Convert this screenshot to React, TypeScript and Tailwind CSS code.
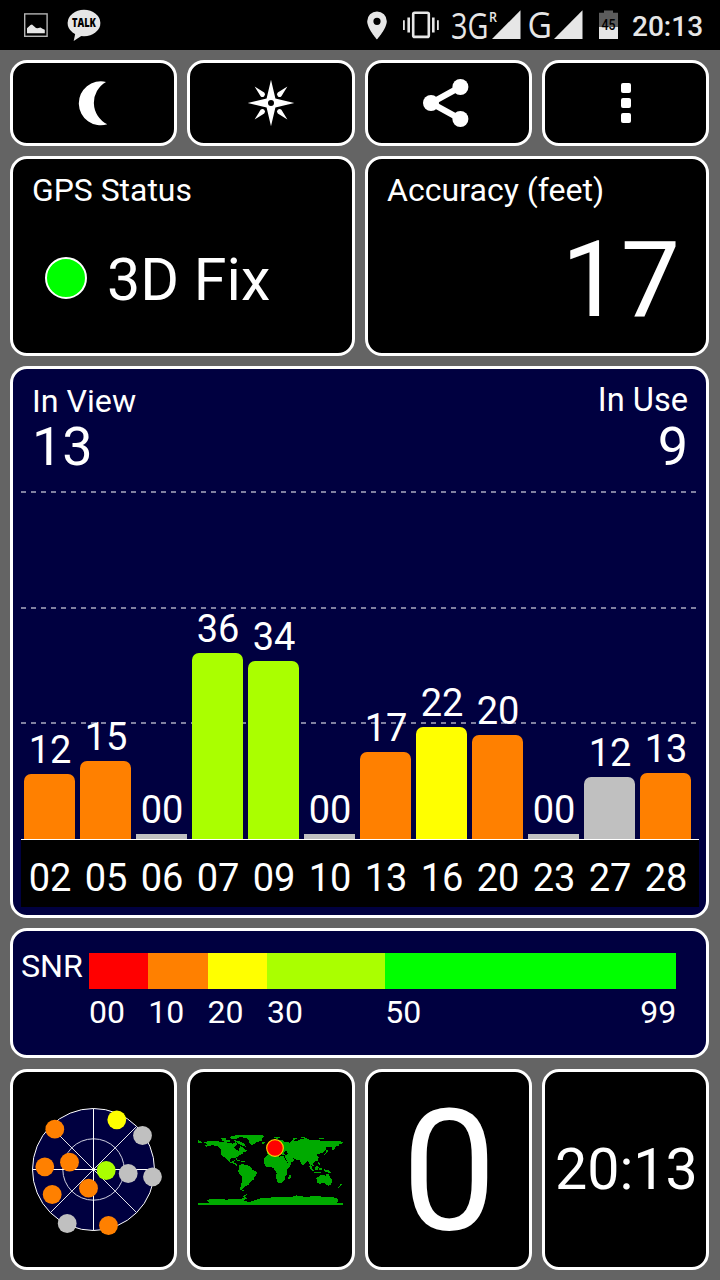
import React from 'react';

type Satellite = { id: string; snr: string; height: number; color: string };

const ORANGE = '#ff8000';
const LIME = '#aaff00';
const YELLOW = '#ffff00';
const GRAY = '#c0c0c0';

const satellites: Satellite[] = [
  { id: '02', snr: '12', height: 65, color: ORANGE },
  { id: '05', snr: '15', height: 78, color: ORANGE },
  { id: '06', snr: '00', height: 5, color: GRAY },
  { id: '07', snr: '36', height: 186, color: LIME },
  { id: '09', snr: '34', height: 178, color: LIME },
  { id: '10', snr: '00', height: 5, color: GRAY },
  { id: '13', snr: '17', height: 87, color: ORANGE },
  { id: '16', snr: '22', height: 112, color: YELLOW },
  { id: '20', snr: '20', height: 104, color: ORANGE },
  { id: '23', snr: '00', height: 5, color: GRAY },
  { id: '27', snr: '12', height: 62, color: GRAY },
  { id: '28', snr: '13', height: 66, color: ORANGE },
];

const snrScale = [
  { label: '00', width: 59.3, color: '#ff0000' },
  { label: '10', width: 59.3, color: ORANGE },
  { label: '20', width: 59.3, color: YELLOW },
  { label: '30', width: 118.3, color: LIME },
  { label: '50', width: 291, color: '#00ff00' },
];

// Positions relative to the centre of the sky view
const skyDots = [
  { x: -38.7, y: -40.3, color: ORANGE },
  { x: 23.3, y: -49.7, color: YELLOW },
  { x: 49, y: -34, color: GRAY },
  { x: -48.7, y: -2.7, color: ORANGE },
  { x: -24, y: -7.3, color: ORANGE },
  { x: 34.7, y: 4, color: GRAY },
  { x: 12.7, y: 1, color: LIME },
  { x: 59, y: 7.3, color: GRAY },
  { x: -41.3, y: 25, color: ORANGE },
  { x: -5, y: 18.7, color: ORANGE },
  { x: -26.3, y: 54, color: GRAY },
  { x: 15, y: 56, color: ORANGE },
];

const land = [
  // North America
  '42,68 56,62 75,62 98,67 120,68 128,72 136,66 142,72 136,78 132,84 138,88 146,94 148,86 150,78 160,82 166,90 176,88 170,94 158,96 160,102 150,104 144,110 139,112 141,119 136,114 124,114 118,120 122,126 129,124 133,119 136,121 131,128 141,131 142,137 148,138 142,139 132,132 118,126 110,118 108,116 98,108 94,104 94,94 90,84 80,77 66,76 50,80 42,78 52,73',
  // Canadian Arctic
  '96,62 104,58 118,60 122,66 104,66',
  '92,56 102,52 108,56 98,60',
  '120,50 138,46 150,44 158,48 144,54 134,58 122,56',
  '130,60 142,62 154,66 164,72 168,80 158,78 148,72 138,66',
  // Greenland
  '148,47 180,44 218,46 224,50 214,56 216,62 202,66 192,72 186,77 180,72 176,62 168,54 152,51',
  '214,66 226,66 226,70 216,71',
  // Caribbean
  '138,118 148,120 156,124 164,124 162,127 150,124 138,121',
  // South America
  '148,136 158,132 172,136 184,142 188,150 201,156 200,162 194,170 192,178 182,184 176,194 168,198 164,202 160,204 156,208 162,212 152,211 150,206 153,194 157,180 156,170 148,160 144,152 148,146',
  // Africa
  '222,118 226,110 236,103 252,101 256,106 268,110 280,108 286,118 292,128 304,130 300,138 292,148 290,156 292,164 286,170 284,178 276,188 264,189 261,180 257,170 260,160 254,150 250,143 240,142 230,141 224,134 221,128',
  '302,164 304,170 300,178 295,176 296,168',
  // Europe
  '230,101 230,92 238,92 236,86 246,80 254,74 248,68 262,62 276,60 284,66 282,84 290,92 280,98 286,104 278,104 270,98 262,100 256,94 246,94 240,101',
  '234,74 240,76 242,84 232,84',
  // Asia
  '274,64 300,68 308,60 318,64 330,58 348,54 360,60 384,60 400,64 430,62 459,65 459,70 446,72 450,76 438,78 434,88 428,90 424,80 410,80 406,84 408,88 400,98 392,98 390,104 384,100 380,106 386,112 384,122 372,126 370,132 372,138 364,136 366,146 360,140 358,128 352,124 344,130 338,137 332,126 328,120 316,118 310,114 304,112 314,120 308,126 296,131 288,118 284,108 294,102 290,92 276,94',
  '306,57 314,54 324,53 320,57 310,60',
  '252,52 268,51 272,54 260,56',
  '332,51 344,52 342,55 334,54',
  '386,55 402,54 400,57 388,58',
  // Japan
  '410,88 416,92 412,98 404,106 398,106 408,98',
  // South-east Asia
  '358,138 366,146 372,152 368,154 360,146',
  '374,142 382,138 386,142 382,150 376,150',
  '370,155 384,156 394,158 386,160 372,158',
  '384,124 388,128 392,136 388,134 384,130',
  '388,144 396,144 394,152 388,150',
  '400,147 408,150 418,152 424,160 414,158 406,155',
  // Australia and New Zealand
  '379,173 386,170 394,164 400,164 406,168 410,162 414,160 418,168 424,176 426,184 422,194 416,198 408,194 402,189 392,191 382,190 380,182',
  '414,200 419,200 417,204',
  '452,192 456,194 450,199 446,204 443,202 449,198',
  '24,60 30,64 36,66 34,69 24,69',
  // Antarctica
  '24,249 56,248 50,242 58,238 90,237 110,239 130,236 150,237 162,234 158,230 166,224 172,222 166,230 170,236 160,242 178,246 190,243 206,236 230,233 260,232 286,230 304,231 318,226 330,228 350,231 372,228 400,230 424,230 444,236 446,244 442,248 459,249 459,255 24,255',
];

const Card: React.FC<{ className?: string; children: React.ReactNode }> = ({ className = '', children }) => (
  <div className={`rounded-[17px] border-[3px] border-white ${className}`}>{children}</div>
);

const SignalTriangle = () => (
  <svg width="29" height="29" viewBox="0 0 29 29" className="shrink-0">
    <path d="M0 29 28.5 0.3V29z" fill="#e6e6e6" />
  </svg>
);

const StatusBar = () => (
  <header className="flex h-[50px] items-start bg-black text-[#e6e6e6]">
    <svg width="24" height="24" viewBox="0 0 24 24" className="mt-[13px] ml-6">
      <rect x="0.7" y="0.9" width="22.4" height="22.4" fill="none" stroke="#b4b4b4" strokeWidth="1.4" />
      <path d="M3 20.3v-5l3.5-3.2 1.5-.5 4 3.4 1.5.2 3-.8 2 1.3 2.3 1v3.6z" fill="#e6e6e6" />
    </svg>
    <svg width="34" height="34" viewBox="0 0 34 34" className="mt-[9px] ml-[19px] overflow-visible">
      <ellipse cx="17" cy="14" rx="16.4" ry="13.2" fill="#e6e6e6" />
      <path d="M8.5 23.5 6.7 32 15 26.5z" fill="#e6e6e6" />
      <text x="5" y="18.3" fontSize="12" fontWeight="800" textLength="24" lengthAdjust="spacingAndGlyphs" className="fill-black font-['Open_Sans',sans-serif]">
        TALK
      </text>
    </svg>

    <svg width="20" height="29" viewBox="0 0 20 29" className="mt-[10.5px] ml-[266px]">
      <path fillRule="evenodd" d="M10 0.5A9.8 9.8 0 0 0 .2 10.3C.2 17.5 10 28.5 10 28.5s9.8-11 9.8-18.2A9.8 9.8 0 0 0 10 .5zm0 6.2a3.6 3.6 0 1 1 0 7.2 3.6 3.6 0 0 1 0-7.2z" fill="#e6e6e6" />
    </svg>
    <svg width="36" height="28" viewBox="0 0 36 28" className="mt-[11px] ml-4">
      <rect x="10.2" y="1.7" width="15.6" height="24.2" rx="1.5" fill="none" stroke="#e6e6e6" strokeWidth="2.6" />
      <path d="M0 9.3h1.8v9.6H0zM4.4 6.5H7v15H4.4zM29 6.5h2.6v15H29zM34 9.3h1.8v9.6H34z" fill="#e6e6e6" />
    </svg>

    <svg width="38" height="50" viewBox="0 0 38 50" className="ml-[12px] overflow-visible">
      <text x="0" y="39" fontSize="37" textLength="37.5" lengthAdjust="spacingAndGlyphs" fill="#e6e6e6" className="font-['Open_Sans',sans-serif]">
        3G
      </text>
    </svg>
    <svg width="8" height="24" viewBox="0 0 8 24" className="overflow-visible">
      <text x="0" y="22.3" fontSize="14" fontWeight="600" textLength="8" lengthAdjust="spacingAndGlyphs" fill="#e6e6e6" className="font-['Open_Sans',sans-serif]">
        R
      </text>
    </svg>
    <div className="mt-[10px] -ml-[5px]">
      <SignalTriangle />
    </div>
    <svg width="25" height="50" viewBox="0 0 25 50" className="ml-[7px] overflow-visible">
      <text x="-0.5" y="38" fontSize="36.5" textLength="24.5" lengthAdjust="spacingAndGlyphs" fill="#e6e6e6" className="font-['Open_Sans',sans-serif]">
        G
      </text>
    </svg>
    <div className="mt-[10px] ml-px">
      <SignalTriangle />
    </div>
    <svg width="19" height="29" viewBox="0 0 19 29" className="mt-[10px] ml-4">
      <path d="M5 0.4h9v2.3h5V17H0V2.7h5z" fill="#5c5c5c" />
      <path d="M0 17h19v12H0z" fill="#e6e6e6" />
      <text x="9.5" y="20" fontSize="14" fontWeight="500" textAnchor="middle" textLength="14" lengthAdjust="spacingAndGlyphs" className="fill-black font-['Roboto',sans-serif]">
        45
      </text>
    </svg>
    <span className="mt-[7px] ml-[14px] text-[28px] leading-[40px] font-medium">20:13</span>
  </header>
);

const MoonIcon = () => (
  <svg width="48" height="48" viewBox="0 0 48 48" fill="#fff">
    <path d="M36 2.9A22 22 0 1 0 37.3 45.3A24 24 0 0 1 36 2.9z" />
  </svg>
);

const CompassIcon = () => (
  <svg width="48" height="48" viewBox="-24 -24 48 48" fill="#fff">
    <path
      fillRule="evenodd"
      d="M0-23.3 4.4-4.6 23.3 0 4.4 4.6 0 23.3-4.4 4.6-23.3 0-4.4-4.6zM0-3a3 3 0 1 0 0 6 3 3 0 0 0 0-6z"
    />
    {[0, 90, 180, 270].map((angle) => (
      <path key={angle} transform={`rotate(${angle})`} d="M16.4 16.4 6.8 10.4A2.4 2.4 0 0 1 10.4 6.8z" />
    ))}
  </svg>
);

const ShareIcon = () => (
  <svg width="48" height="48" viewBox="0 0 48 48" fill="#fff" className="overflow-visible">
    <path d="M36.2 8 7 24l29.2 16" fill="none" stroke="#fff" strokeWidth="6" />
    <circle cx="7" cy="24" r="8" />
    <circle cx="36.4" cy="8" r="8" />
    <circle cx="36.4" cy="40" r="8" />
  </svg>
);

const SnrChart = () => (
  <Card className="relative flex h-[552px] flex-col bg-[#000040]">
    <svg className="absolute top-0 left-0" width="690" height="400">
      {[123, 239, 354].map((y) => (
        <path key={y} d={`M8 ${y}H683`} stroke="#8080a0" strokeWidth="2" strokeDasharray="5 5" />
      ))}
    </svg>
    <div className="relative flex justify-between pt-[13px] pr-[18px] pl-[19px]">
      <div>
        <div className="text-[32.2px] leading-[38px]">In View</div>
        <div className="mt-[2px] text-[54px] leading-[50px]">13</div>
      </div>
      <div className="-mt-px text-right">
        <div className="text-[32.6px] leading-[38px]">In Use</div>
        <div className="mt-[3px] text-[54px] leading-[50px]">9</div>
      </div>
    </div>
    <div className="relative flex flex-1 items-end gap-[5px] pl-[11px]">
      {satellites.map((sat) => (
        <div key={sat.id} className="w-[51px]">
          <div className="mb-[5px] pl-px text-center text-[38px] leading-[38px]">{sat.snr}</div>
          <div
            className={sat.height > 10 ? 'rounded-t-[7px]' : ''}
            style={{ height: sat.height, backgroundColor: sat.color }}
          />
        </div>
      ))}
    </div>
    <div className="relative mr-[7px] mb-2 ml-2 flex h-[68px] gap-[5px] border-t border-white bg-black pt-[9px] pl-[3px]">
      {satellites.map((sat) => (
        <div key={sat.id} className="w-[51px] pl-px text-center text-[38px] leading-[58px]">{sat.id}</div>
      ))}
    </div>
  </Card>
);

const SnrLegend = () => (
  <Card className="flex h-[130px] bg-[#000040] pl-2">
    <div className="w-[68px] pt-4 text-[32.2px] leading-[38px]">SNR</div>
    <div className="pt-[22px]">
      <div className="flex h-9">
        {snrScale.map((s) => (
          <div key={s.label} style={{ width: s.width, backgroundColor: s.color }} />
        ))}
      </div>
      <div className="mt-1 flex text-[32px] leading-[38px]">
        {snrScale.map((s) => (
          <div key={s.label} className="flex justify-between" style={{ width: s.width }}>
            <span>{s.label}</span>
            {s.label === '50' && <span>99</span>}
          </div>
        ))}
      </div>
    </div>
  </Card>
);

const SkyView = () => (
  <svg width="140" height="140" viewBox="-70.5 -70.5 140 140" className="shrink-0">
    <circle r="61" fill="#000040" stroke="#fff" />
    <circle r="30.7" fill="none" stroke="#d0d0e0" />
    <path d="M0-61V61M-61 0H61" stroke="#fff" />
    <path d="M-43-43 43 43M43-43-43 43" stroke="#fff" strokeWidth="0.9" />
    {skyDots.map((dot, i) => (
      <circle key={i} cx={dot.x} cy={dot.y} r="9.4" fill={dot.color} />
    ))}
  </svg>
);

const WorldMap = () => (
  <svg width="160" height="100" viewBox="0 0 480 300" className="shrink-0">
    <g fill="#00aa00" shapeRendering="crispEdges">
      {land.map((points) => (
        <polygon key={points} points={points} />
      ))}
    </g>
    <circle cx="255" cy="84" r="25" fill="#ff0000" stroke="#ffd000" strokeWidth="3.5" />
  </svg>
);

const App: React.FC = () => {
  return (
    <div className="h-[1280px] w-[720px] overflow-hidden bg-[#646464] font-['Roboto',sans-serif] text-white">
      <StatusBar />
      <main className="flex flex-col gap-[10px] pt-[10px] pr-[11px] pl-[10px]">
        {/* Toolbar */}
        <div className="grid h-[86px] grid-cols-4 gap-[10px]">
          <Card className="flex items-center justify-center bg-black"><MoonIcon /></Card>
          <Card className="flex items-center justify-center bg-black"><CompassIcon /></Card>
          <Card className="flex items-center justify-center bg-black"><ShareIcon /></Card>
          <Card className="flex flex-col items-center justify-center gap-[5px] bg-black pl-[2px]">
            <div className="size-[10px] rounded-[2px] bg-white" />
            <div className="size-[10px] rounded-[2px] bg-white" />
            <div className="size-[10px] rounded-[2px] bg-white" />
          </Card>
        </div>

        {/* Fix and accuracy */}
        <div className="grid h-[200px] grid-cols-2 gap-[10px]">
          <Card className="bg-black pt-3 pl-[19px]">
            <div className="text-[31.9px] leading-[38px]">GPS Status</div>
            <div className="mt-[41px] ml-[13px] flex items-center">
              <div className="-mt-1 size-[42px] rounded-full border-2 border-white bg-[#00ff00]" />
              <span className="ml-5 text-[59.2px] leading-[60px]">3D Fix</span>
            </div>
          </Card>
          <Card className="bg-black pt-3 pl-[19.5px]">
            <div className="text-[32.1px] leading-[38px]">Accuracy (feet)</div>
            <div className="mt-4 pr-[26px] text-right text-[105.5px] leading-[110px]">17</div>
          </Card>
        </div>

        <SnrChart />
        <SnrLegend />

        {/* Bottom widgets */}
        <div className="mt-px grid h-[201px] grid-cols-4 gap-[10px]">
          <Card className="flex items-center justify-center bg-black pr-px pb-px"><SkyView /></Card>
          <Card className="flex items-center justify-center bg-black pr-[2px]"><WorldMap /></Card>
          <Card className="flex items-center justify-center bg-black pt-[2px] pl-[2px] text-[169px] leading-[190px]">0</Card>
          <Card className="flex items-center justify-center bg-black pl-[2px] text-[57.4px] leading-[68px]">20:13</Card>
        </div>
      </main>
    </div>
  );
};

export default App;
